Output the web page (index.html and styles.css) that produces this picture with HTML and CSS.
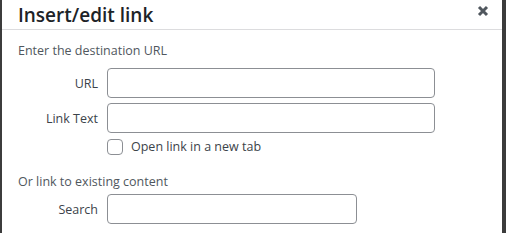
FILE: index.html
```html
<!DOCTYPE html>
<html lang="en">
<head>
    <meta charset="UTF-8">
    <title>Insert/edit link</title>
    <link rel="stylesheet" href="styles.css">
</head>
<body>
    <div class="dialog">
        <div class="dialog-header">
            <h1>Insert/edit link</h1>
            <button class="close-btn" aria-label="Close">
                <svg width="12" height="12" viewBox="0 0 12 12"><path d="M2 2L10 10M10 2L2 10" stroke="#50575e" stroke-width="3"/></svg>
            </button>
        </div>
        <div class="dialog-body">
            <p class="section-title">Enter the destination URL</p>
            <div class="field">
                <label>URL</label>
                <input type="text" class="wide">
            </div>
            <div class="field">
                <label>Link Text</label>
                <input type="text" class="wide">
            </div>
            <div class="check-row">
                <input type="checkbox" id="newtab">
                <label for="newtab">Open link in a new tab</label>
            </div>
            <p class="section-title second">Or link to existing content</p>
            <div class="field">
                <label>Search</label>
                <input type="text" class="narrow">
            </div>
        </div>
    </div>
</body>
</html>
```

FILE: styles.css
```css
body {
    margin: 0;
    background: #3c3c3c;
    font-family: "Open Sans", "Noto Sans", sans-serif;
    color: #3c434a;
}
.dialog {
    margin: 0 4px 0 2px;
    height: 233px;
    background: white;
    overflow: hidden;
}
.dialog-header {
    height: 29px;
    border-bottom: 1px solid #dcdcde;
    display: flex;
    align-items: center;
    justify-content: space-between;
    padding: 0 13px 0 16px;
}
h1 {
    margin: 0;
    font-size: 19px;
    font-weight: 600;
    color: #1d2327;
    line-height: 26px;
}
.close-btn {
    align-self: flex-start;
    margin-top: 5px;
    background: none;
    border: none;
    padding: 0;
    display: flex;
    cursor: pointer;
}
.dialog-body {
    padding: 12px 16px 0;
}
.section-title {
    margin: 0 0 9px;
    font-size: 12.5px;
    color: #50575e;
}
.section-title.second {
    margin: 18px 0 4px;
}
.field {
    display: flex;
    align-items: center;
    margin-bottom: 5px;
}
.field label {
    width: 80px;
    padding-right: 9px;
    text-align: right;
    font-size: 12.5px;
    color: #3c434a;
}
.field input {
    height: 30px;
    box-sizing: border-box;
    border: 1px solid #8c8f94;
    border-radius: 4px;
    padding: 0 8px;
}
.wide {
    width: 328px;
}
.narrow {
    width: 250px;
}
.check-row {
    display: flex;
    align-items: center;
    padding-left: 89px;
}
.check-row input {
    width: 16px;
    height: 16px;
    margin: 0 8px 0 0;
    appearance: none;
    border: 1px solid #8c8f94;
    border-radius: 4px;
}
.check-row label {
    font-size: 12.5px;
}
```
